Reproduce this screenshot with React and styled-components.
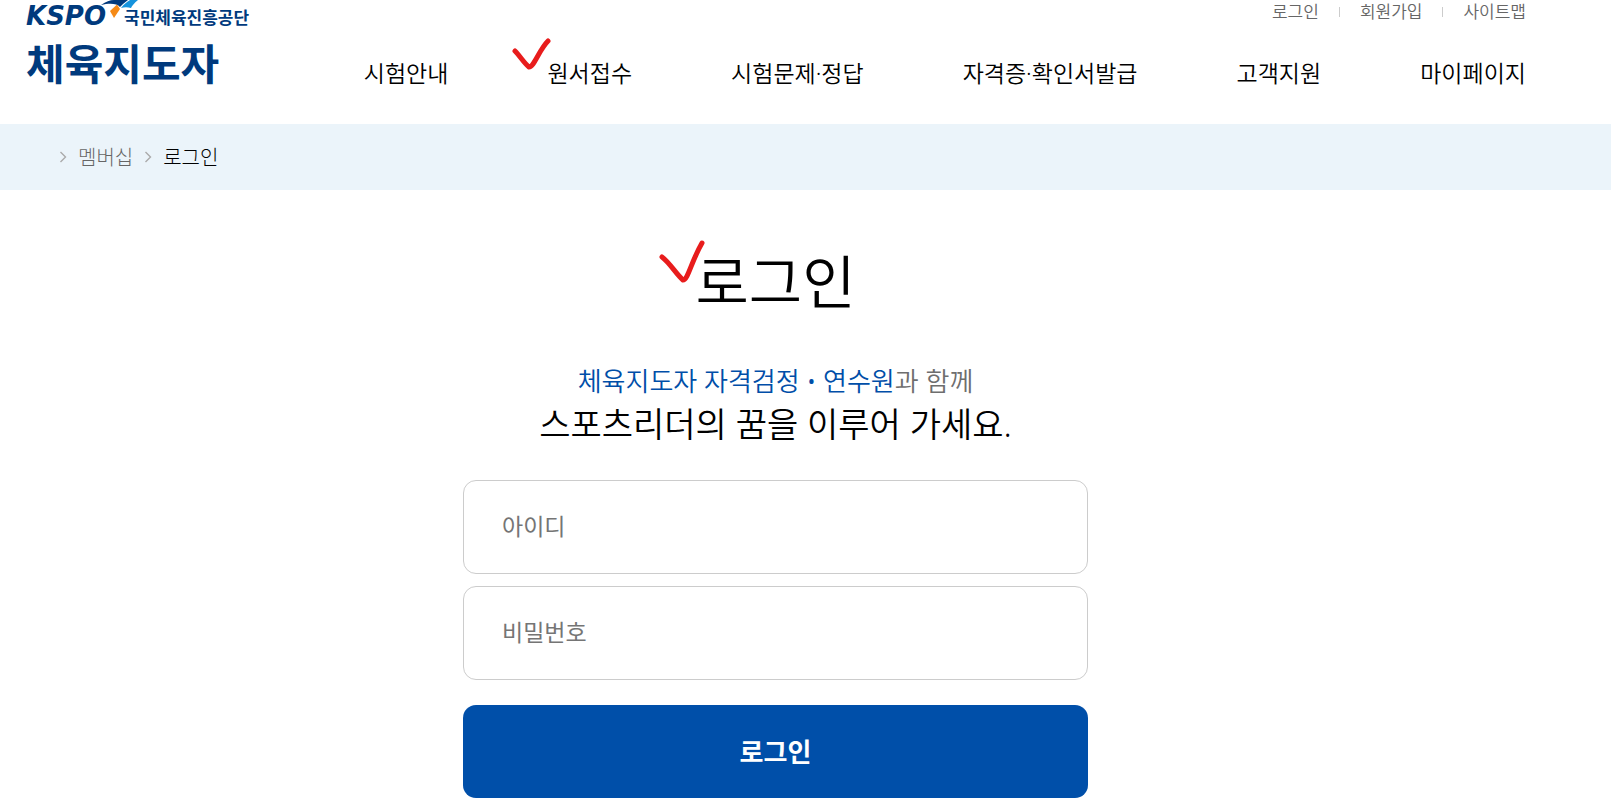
import React from "react";
import styled, { createGlobalStyle } from "styled-components";

const GlobalStyle = createGlobalStyle`
  *, *::before, *::after { box-sizing: border-box; }
  body {
    margin: 0;
    background: #fff;
    color: #000;
    font-family: "Noto Sans", "Noto Sans CJK KR", sans-serif;
    font-weight: 350;
  }
  a { color: inherit; text-decoration: none; }
  ul, ol { list-style: none; margin: 0; padding: 0; }
`;

const Header = styled.header`
  display: flex;
  justify-content: space-between;
  height: 124px;
  padding: 0 85px 0 26px;
`;

const Logo = styled.a`
  display: flex;
  flex-direction: column;
  color: #003a7d;
  font-weight: 700;
  white-space: nowrap;
`;

const Agency = styled.span`
  display: flex;
  align-items: flex-end;
  height: 32px;
  font-size: 17px;
  line-height: 28px;
`;

const Wordmark = styled.span`
  font-family: "DejaVu Sans", sans-serif;
  font-size: 26px;
  font-style: italic;
  line-height: 32px;
`;

const Emblem = styled.svg`
  width: 40px;
  height: 32px;
  margin: 0 -17px 0 -5px;
`;

const SiteName = styled.span`
  font-size: 42px;
  line-height: 64px;
`;

const Menus = styled.div`
  display: flex;
  flex-direction: column;
  align-items: flex-end;
`;

const UtilityList = styled.ul`
  display: flex;
  height: 24px;
  color: #666;
  font-size: 17px;
  line-height: 24px;
`;

const UtilityItem = styled.li`
  display: flex;
  align-items: center;

  & + &::before {
    content: "";
    width: 1px;
    height: 10px;
    margin: 0 20px;
    background: #ccc;
  }
`;

const MainMenu = styled.ul`
  display: flex;
  gap: 99px;
  padding-top: 32px;
  font-size: 23px;
  line-height: 34px;
  white-space: nowrap;
`;

const MenuItem = styled.li`
  position: relative;
`;

const CheckMark = styled.svg`
  position: absolute;
  top: ${(p) => p.$top}px;
  left: ${(p) => p.$left}px;
  width: ${(p) => p.$width}px;
  height: 44px;
  fill: none;
  stroke: #e81c1c;
  stroke-width: 5;
  stroke-linecap: round;
  stroke-linejoin: round;
  pointer-events: none;
`;

const BreadcrumbBar = styled.nav`
  height: 66px;
  padding: 0 59px;
  background: #ebf4fa;
`;

const Crumbs = styled.ol`
  display: flex;
  align-items: center;
  height: 64px;
  font-size: 20px;
  font-weight: 300;
`;

const Crumb = styled.li`
  display: flex;
  align-items: center;
  color: ${(p) => (p.$current ? "#000" : "#666")};
  margin-right: 11px;
`;

const Chevron = styled.svg`
  width: 8px;
  height: 12px;
  margin: 2px 11px 0 0;
  fill: none;
  stroke: #aaa;
  stroke-width: 1.4;
`;

const Main = styled.main`
  display: flex;
  flex-direction: column;
  align-items: center;
  padding: 50px 86px 12px 26px;
`;

const Title = styled.h1`
  position: relative;
  margin: 0;
  font-size: 58px;
  font-weight: 350;
  line-height: 84px;
`;

const Slogan = styled.p`
  margin: 36px 0 0;
  text-align: center;
  font-size: 34px;
  line-height: 44px;
`;

const SloganLead = styled.span`
  display: block;
  color: #6e6e6e;
  font-size: 26px;
  line-height: 42px;
`;

const Brand = styled.span`
  color: #004ea8;
`;

const LoginForm = styled.form`
  display: flex;
  flex-direction: column;
  gap: 12px;
  width: 100%;
  max-width: 625px;
  margin-top: 34px;
`;

const Field = styled.input`
  width: 100%;
  height: 94px;
  padding: 0 38px 2px;
  border: 1px solid #ccc;
  border-radius: 13px;
  background: #fff;
  font: inherit;
  font-size: 23px;
  font-weight: 400;
  outline-color: #004ea8;

  &::placeholder { color: #757575; opacity: 1; }
`;

const SubmitButton = styled.button`
  height: 93px;
  margin-top: 13px;
  padding-bottom: 3px;
  border: 0;
  border-radius: 13px;
  background: #004fa9;
  color: #fff;
  font: inherit;
  font-size: 26px;
  font-weight: 700;
  cursor: pointer;
`;

const utilities = ["로그인", "회원가입", "사이트맵"];
const menus = ["시험안내", "원서접수", "시험문제·정답", "자격증·확인서발급", "고객지원", "마이페이지"];

const ChevronIcon = () => (
  <Chevron viewBox="0 0 8 12" aria-hidden="true">
    <path d="M1.5 1L6.5 6L1.5 11" />
  </Chevron>
);

export default function App() {
  return (
    <>
      <GlobalStyle />
      <Header>
        <Logo href="#">
          <Agency>
            <Wordmark>KSPO</Wordmark>
            <Emblem viewBox="0 0 40 32" aria-hidden="true">
              <path d="M0 5C5 1.500 9 0 13 0H27L22 4L19 7C16 3.500 9 3 0 5Z" fill="#003a7d" />
              <path d="M20 8C23 4 26 2 29 0H37C33 3 31 6 30 8C27 7 23 7 20 8Z" fill="#1593dd" />
              <path d="M16 4.500L19 9L13 18L9 11Z" fill="#f58a16" />
            </Emblem>
            국민체육진흥공단
          </Agency>
          <SiteName>체육지도자</SiteName>
        </Logo>
        <Menus>
          <UtilityList>
            {utilities.map((label) => (
              <UtilityItem key={label}><a href="#">{label}</a></UtilityItem>
            ))}
          </UtilityList>
          <nav aria-label="주 메뉴">
            <MainMenu>
              {menus.map((label) => (
                <MenuItem key={label}>
                  <a href="#">{label}</a>
                  {label === "원서접수" && (
                    <CheckMark $top={-19} $left={-36} $width={40} viewBox="0 0 40 44" aria-hidden="true">
                      <path d="M4 14C9 19 13 26 18 30C23 30 28 13 37 4" />
                    </CheckMark>
                  )}
                </MenuItem>
              ))}
            </MainMenu>
          </nav>
        </Menus>
      </Header>
      <BreadcrumbBar aria-label="현재 위치">
        <Crumbs>
          <Crumb><ChevronIcon /><a href="#">멤버십</a></Crumb>
          <Crumb $current><ChevronIcon /><a href="#" aria-current="page">로그인</a></Crumb>
        </Crumbs>
      </BreadcrumbBar>
      <Main>
        <Title>
          로그인
          <CheckMark $top={0} $left={-37} $width={48} viewBox="0 0 48 44" aria-hidden="true">
            <path d="M4 17C12 23 18 34 25 40C30 40 33 22 44 3" />
          </CheckMark>
        </Title>
        <Slogan>
          <SloganLead><Brand>체육지도자 자격검정 • 연수원</Brand>과 함께</SloganLead>
          스포츠리더의 꿈을 이루어 가세요.
        </Slogan>
        <LoginForm onSubmit={(e) => e.preventDefault()}>
          <Field type="text" placeholder="아이디" aria-label="아이디" autoComplete="username" />
          <Field type="password" placeholder="비밀번호" aria-label="비밀번호" autoComplete="current-password" />
          <SubmitButton type="submit">로그인</SubmitButton>
        </LoginForm>
      </Main>
    </>
  );
}
